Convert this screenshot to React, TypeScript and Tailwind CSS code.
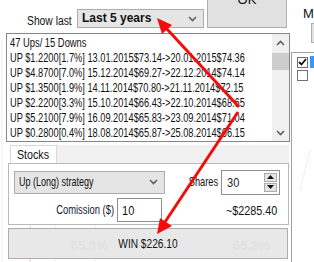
import React from "react";

const rows = [
  "UP $1.2200[1.7%] 13.01.2015$73.14->20.01.2015$74.36",
  "UP $4.8700[7.0%] 15.12.2014$69.27->22.12.2014$74.14",
  "UP $1.3500[1.9%] 14.11.2014$70.80->21.11.2014$72.15",
  "UP $2.2200[3.3%] 15.10.2014$66.43->22.10.2014$68.65",
  "UP $5.2100[7.9%] 16.09.2014$65.83->23.09.2014$71.04",
  "UP $0.2800[0.4%] 18.08.2014$65.87->25.08.2014$66.15",
];

function Chevron({ up = false }: { up?: boolean }) {
  return (
    <svg width="9" height="6" viewBox="0 0 9 6">
      <path
        d={up ? "M1 5l3.5-3.5L8 5" : "M1 1l3.5 3.5L8 1"}
        fill="none"
        stroke="#606060"
        strokeWidth="1.6"
      />
    </svg>
  );
}

function Background() {
  return (
    <svg className="absolute inset-0" width="314" height="262">
      <line x1="30" y1="150" x2="30" y2="262" stroke="#f3e4e6" strokeWidth="2" />
      <line x1="55" y1="170" x2="55" y2="262" stroke="#ececec" />
      <line x1="95" y1="200" x2="95" y2="262" stroke="#ececec" />
      <line x1="2" y1="40" x2="2" y2="262" stroke="#f1eef0" />
      <line x1="300" y1="190" x2="310" y2="150" stroke="#eeeeee" />
    </svg>
  );
}

function Arrows() {
  return (
    <svg className="pointer-events-none absolute inset-0" width="314" height="262">
      <line x1="239" y1="107" x2="166" y2="28" stroke="#f20d0d" strokeWidth="3" />
      <polygon points="157,18 172,25 162,34" fill="#f20d0d" />
      <line x1="238" y1="112" x2="165" y2="222" stroke="#f20d0d" strokeWidth="3" />
      <polygon points="157,234 160,218 172,226" fill="#f20d0d" />
    </svg>
  );
}

export default function App() {
  return (
    <div className="relative h-[262px] w-[314px] overflow-hidden bg-white font-['Liberation_Sans',Arial,sans-serif] text-[12px] leading-[15px] text-[#111]">
      <Background />
      <div className="relative flex">
        {/* main form */}
        <div className="flex w-[291px] flex-col">
          <div className="flex h-[33px] items-start">
            <div className="ml-[27px] mt-[14px] w-[50px] whitespace-nowrap">
              <span className="inline-block origin-left scale-x-[0.86]">Show last</span>
            </div>
            <div className="mt-[9px] flex h-[19px] w-[127px] items-center justify-between border border-[#acacac] bg-[#e5e5e5] pl-[4px] pr-[6px]">
              <span className="text-[12px] font-bold">Last 5 years</span>
              <Chevron />
            </div>
            <button className="-mt-[30px] ml-[3px] flex h-[58px] w-[80px] items-center justify-center border border-[#adadad] bg-[#e1e1e1] text-[13px]">
              OK
            </button>
          </div>

          <div className="ml-[6px] flex h-[109px] w-[284px] border border-[#828790] bg-white">
            <div className="flex-1 overflow-hidden pl-[3px] pt-[2px]">
              <div className="origin-left scale-x-[0.78] whitespace-nowrap">47 Ups/ 15 Downs</div>
              {rows.map((r) => (
                <div key={r} className="origin-left scale-x-[0.77] whitespace-nowrap">{r}</div>
              ))}
            </div>
            <div className="flex w-[17px] flex-col items-center bg-[#f0f0f0]">
              <div className="flex h-[17px] items-center"><Chevron up /></div>
              <div className="mt-[2px] h-[17px] w-[17px] bg-[#cdcdcd]" />
              <div className="flex-1" />
              <div className="flex h-[17px] items-center"><Chevron /></div>
            </div>
          </div>

          <div className="ml-[8px] mt-[3px] flex w-[281px] flex-col">
            <div className="flex h-[18px]">
              <div className="ml-[2px] w-[47px] whitespace-nowrap border border-b-0 border-[#d9d9d9] bg-white pl-[6px] pt-[1px] text-[13px]">
                <span className="inline-block origin-left scale-x-[0.82]">Stocks</span>
              </div>
              <div className="flex-1 bg-[#f0f0f0]" />
            </div>
            <div className="flex h-[62px] flex-col border border-[#b9b9b9] bg-white">
              <div className="mt-[6px] flex h-[24px] items-center">
                <div className="ml-[5px] flex h-[23px] w-[151px] items-center justify-between whitespace-nowrap border border-[#acacac] bg-[#e5e5e5] pl-[4px] pr-[6px]">
                  <span className="inline-block origin-left scale-x-[0.75]">Up (Long) strategy</span>
                  <Chevron />
                </div>
                <div className="w-[56px] whitespace-nowrap pr-[3px] text-right">
                  <span className="inline-block origin-right scale-x-[0.77]">Shares</span>
                </div>
                <div className="flex h-[25px] w-[59px] items-center justify-between border border-[#8f8f8f] pl-[5px] pr-[2px] text-[#1c1c1c]">
                  <span className="inline-block origin-left scale-x-[0.85] text-[13px]">30</span>
                  <div className="flex w-[13px] flex-col gap-[1px]">
                    <div className="flex h-[9px] items-center justify-center border border-[#acacac] bg-[#e5e5e5]">
                      <svg width="7" height="4" viewBox="0 0 7 4"><polygon points="0,4 3.5,0 7,4" fill="#111" /></svg>
                    </div>
                    <div className="flex h-[9px] items-center justify-center border border-[#acacac] bg-[#e5e5e5]">
                      <svg width="7" height="4" viewBox="0 0 7 4"><polygon points="0,0 3.5,4 7,0" fill="#111" /></svg>
                    </div>
                  </div>
                </div>
              </div>
              <div className="mt-[4px] flex h-[24px] items-center">
                <div className="w-[110px] whitespace-nowrap pr-[3px] text-right text-[#16163a]">
                  <span className="inline-block origin-right scale-x-[0.78]">Comission ($)</span>
                </div>
                <div className="flex h-[24px] w-[46px] items-center border border-[#8f8f8f] pl-[4px] text-[13px]">
                  <span className="inline-block origin-left scale-x-[0.85]">10</span>
                </div>
                <div className="ml-[64px] whitespace-nowrap text-[13px]">
                  <span className="inline-block origin-left scale-x-[0.83]">~$2285.40</span>
                </div>
              </div>
            </div>
          </div>

          <button className="relative ml-[8px] mt-[3px] flex h-[31px] w-[280px] items-center justify-center whitespace-nowrap border border-[#adadad] bg-[#e8e8e8] text-[13px]">
            <span className="absolute left-[62px] top-[9px] font-bold text-[#e1e1e1]">65.3%</span>
            <span className="absolute left-[224px] top-[9px] font-bold text-[#e1e1e1]">65.3%</span>
            <span className="relative inline-block scale-x-[0.78]">WIN $226.10</span>
          </button>
        </div>

        {/* right column */}
        <div className="flex w-[23px] flex-col">
          <div className="flex h-[52px] flex-col">
            <span className="ml-[12px] mt-[6px] text-[13px]">M</span>
            <div className="ml-[20px] mt-[2px] h-[20px] w-[10px] border border-[#adadad] bg-[#e1e1e1]" />
          </div>
          <div className="flex h-[210px] flex-col border-l border-t border-[#a0a0a0] pl-[5px] pt-[3px]">
            <div className="flex items-center gap-[2px]">
              <div className="flex h-[11px] w-[11px] shrink-0 items-center justify-center border border-[#707070] bg-white">
                <svg width="9" height="8" viewBox="0 0 9 8"><path d="M1 4l2.5 2.5L8 1" fill="none" stroke="#111" strokeWidth="1.8" /></svg>
              </div>
              <span className="h-[12px] w-[4px] shrink-0 bg-[#3399ff]" />
            </div>
            <div className="mt-[2px] flex items-center gap-[2px]">
              <div className="h-[11px] w-[11px] shrink-0 border border-[#707070] bg-white" />
            </div>
          </div>
        </div>
      </div>
      <Arrows />
    </div>
  );
}
